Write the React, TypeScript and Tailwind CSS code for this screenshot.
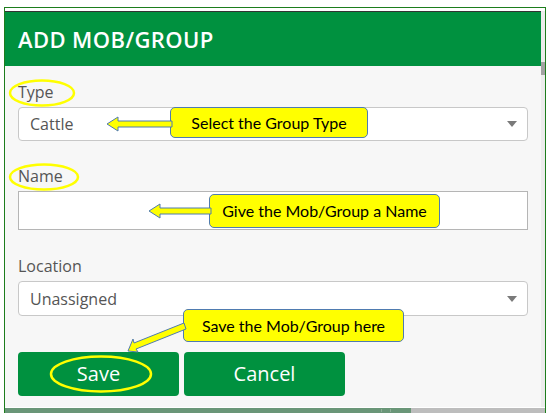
import React from 'react'

const CALLOUTS = [
  { text: 'Select the Group Type', cls: 'left-[170px] top-[107px] w-[198px] h-[31px]' },
  { text: 'Give the Mob/Group a Name', cls: 'left-[209px] top-[194px] w-[231px] h-[34px]' },
  { text: 'Save the Mob/Group here', cls: 'left-[183px] top-[309px] w-[221px] h-[33px]' },
]

function Caret() {
  return (
    <svg width="10" height="6" viewBox="0 0 10 6" aria-hidden="true">
      <path d="M0 0h10L5 6z" fill="#7a7a7a" />
    </svg>
  )
}

function Overlay() {
  // annotation arrows + highlight rings drawn over the dialog
  return (
    <svg
      className="pointer-events-none absolute inset-0"
      width="546"
      height="416"
      viewBox="0 0 546 416"
      aria-hidden="true"
    >
      <g fill="#ffff00" stroke="#4f7bb0" strokeWidth="1" strokeLinejoin="round">
        <path d="M107 124 L118 117 L118 121 L172 121 L172 127 L118 127 L118 131 Z" />
        <path d="M149 211 L160 204 L160 208 L211 208 L211 214 L160 214 L160 218 Z" />
        <path d="M128 351 L133 339 L134 343 L184 323 L186 329 L136 349 L138 352 Z" />
      </g>
      <g fill="none" stroke="#ffff00" strokeWidth="2.5">
        <ellipse cx="42" cy="93" rx="32" ry="12.5" />
        <ellipse cx="44" cy="177" rx="34" ry="12.5" />
        <ellipse cx="101" cy="374" rx="50" ry="17.5" />
      </g>
    </svg>
  )
}

export default function App() {
  return (
    <div className="relative h-[416px] w-[546px] overflow-hidden bg-white pl-[4px] pt-[7px] font-['Open_Sans',sans-serif]">
      <div className="flex h-[406px] flex-col border-x border-t border-[#1d7d1d] pt-[3px]">
        <div className="flex flex-1">
          <div className="flex w-[536px] flex-col border-t border-[#333]">
            <div className="flex h-[54px] items-center bg-[#00913f] pl-[13px]">
              <h1 className="text-[22px] font-semibold tracking-[0.4px] text-white">ADD MOB/GROUP</h1>
            </div>
            <div className="flex flex-1 flex-col bg-[#f7f7f7] pl-[13px] pt-[16px]">
              <label className="h-[20px] text-[16px] leading-[20px] text-[#555]">Type</label>
              <div className="mt-[5px] flex h-[34px] w-[510px] items-center justify-between rounded-[4px] border border-[#c8c8c8] bg-white pl-[11px] pr-[10px]">
                <span className="text-[16px] text-[#555]">Cattle</span>
                <Caret />
              </div>

              <label className="mt-[25px] h-[20px] text-[16px] leading-[20px] text-[#555]">Name</label>
              <div className="mt-[5px] h-[39px] w-[510px] border border-[#b5b5b5] bg-white" />

              <label className="mt-[26px] h-[20px] text-[16px] leading-[20px] text-[#555]">Location</label>
              <div className="mt-[5px] flex h-[35px] w-[510px] items-center justify-between rounded-[4px] border border-[#c8c8c8] bg-white pl-[11px] pr-[10px]">
                <span className="text-[16px] text-[#555]">Unassigned</span>
                <Caret />
              </div>

              <div className="mt-[36px] flex gap-[5px]">
                <button className="h-[44px] w-[161px] rounded-[4px] bg-[#00913f] text-[20px] font-medium text-white">Save</button>
                <button className="h-[44px] w-[161px] rounded-[4px] bg-[#00913f] text-[20px] font-medium text-white">Cancel</button>
              </div>
            </div>
          </div>
          <div className="flex w-[4px] flex-col bg-[#ececec] pt-[51px]">
            <div className="h-[13px] bg-[#a3a3a3]" />
          </div>
        </div>
        <div className="mt-[1px] flex h-[5px]">
          <div className="flex w-[406px] items-center justify-end bg-[#6a9678] pr-[20px]">
            <span className="h-[3px] w-[10px] border-x border-[#8fae98]" />
          </div>
          <div className="flex-1 bg-[#bdbdbd]" />
        </div>
      </div>

      {CALLOUTS.map((c) => (
        <div
          key={c.text}
          className={`absolute flex items-center justify-center rounded-[5px] border border-[#4f7bb0] bg-[#ffff00] font-['Lato',sans-serif] text-[16px] text-black ${c.cls}`}
        >
          {c.text}
        </div>
      ))}
      <Overlay />
    </div>
  )
}
